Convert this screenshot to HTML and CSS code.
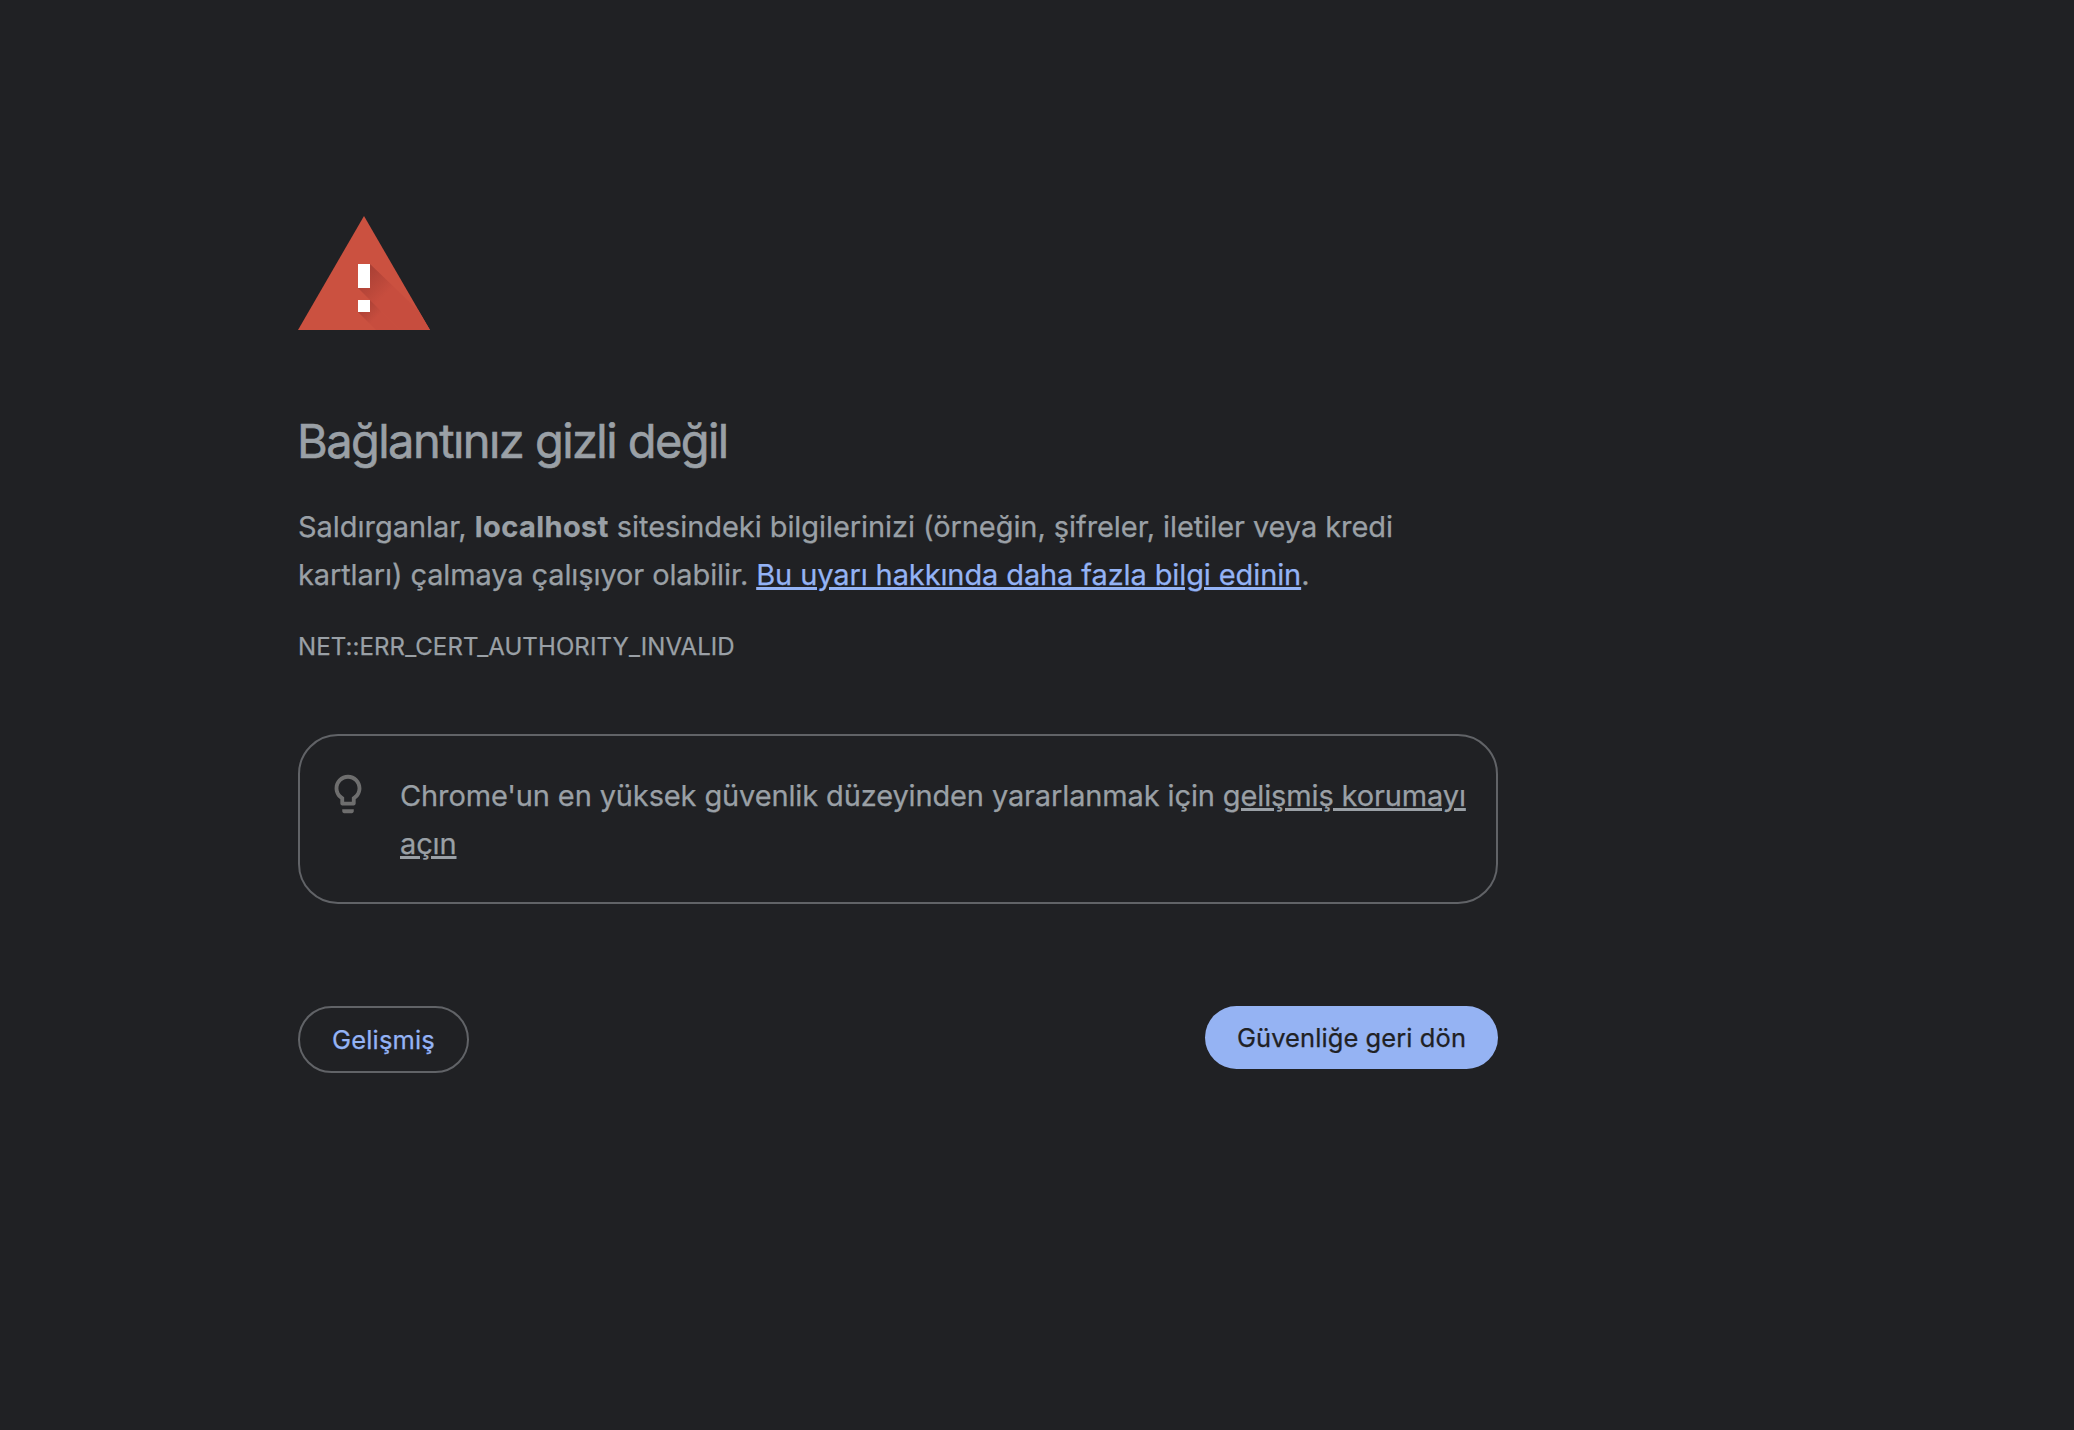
FILE: index.html
```
<!DOCTYPE html>
<html lang="tr">
<head>
<meta charset="utf-8">
<title>Gizlilik hatası</title>
<link rel="stylesheet" href="styles.css">
</head>
<body>
<main class="interstitial">
  <svg class="warning-icon" width="132" height="114" viewBox="0 0 132 114" aria-hidden="true">
    <defs>
      <linearGradient id="bar-shade" gradientUnits="userSpaceOnUse" x1="64" y1="58" x2="86" y2="80">
        <stop offset="0" stop-color="#a94035"/>
        <stop offset="1" stop-color="#c74d3e"/>
      </linearGradient>
      <linearGradient id="dot-shade" gradientUnits="userSpaceOnUse" x1="64" y1="88" x2="78" y2="102">
        <stop offset="0" stop-color="#a94035"/>
        <stop offset="1" stop-color="#c74d3e"/>
      </linearGradient>
    </defs>
    <path fill="#cb5140" d="M66 0l66 114H0z"/>
    <path fill="url(#bar-shade)" d="M72 48l48 46 12 20H102L60 72z"/>
    <path fill="url(#dot-shade)" d="M72 84l30 30H78L60 96z"/>
    <path fill="#fff" d="M60 48h12v24H60zM60 84h12v12H60z"/>
  </svg>
  <h1 class="title">Bağlantınız gizli değil</h1>
  <p class="message"><span class="lead">Saldırganlar, </span><strong class="host">localhost</strong> sitesindeki bilgilerinizi (örneğin, şifreler, iletiler veya kredi<br><span class="second-line">kartları) çalmaya çalışıyor olabilir. <a class="learn-more" href="#">Bu uyarı hakkında daha fazla bilgi edinin</a>.</span></p>
  <div class="error-code">NET::ERR_CERT_AUTHORITY_INVALID</div>
  <section class="promo">
    <svg class="bulb-icon" width="46" height="46" viewBox="0 0 24 24" aria-hidden="true"><path fill="#6e6e6e" d="M9 21c0 .55.45 1 1 1h4c.55 0 1-.45 1-1v-1H9v1zm3-19C8.140 2 5 5.140 5 9c0 2.380 1.190 4.470 3 5.740V17c0 .55.45 1 1 1h6c.55 0 1-.45 1-1v-2.260c1.810-1.270 3-3.360 3-5.740 0-3.860-3.140-7-7-7zm2.850 11.100l-.85.6V16h-4v-2.300l-.85-.6C7.800 12.160 7 10.630 7 9c0-2.760 2.240-5 5-5s5 2.240 5 5c0 1.630-.8 3.160-2.150 4.100z"/></svg>
    <p class="promo-text">Chrome'un en yüksek güvenlik düzeyinden yararlanmak için <a class="promo-link" href="#">gelişmiş korumayı<br>açın</a></p>
  </section>
  <div class="actions">
    <button class="button secondary" type="button">Gelişmiş</button>
    <button class="button primary" type="button">Güvenliğe geri dön</button>
  </div>
</main>
</body>
</html>
```
FILE: styles.css
```
* { box-sizing: border-box; }
body {
  margin: 0;
  min-height: 100vh;
  background: #202124;
  color: #9aa0a6;
  font-family: Inter, sans-serif;
  -webkit-text-stroke: 0.25px currentColor;
}
.interstitial {
  width: 1200px;
  margin-left: 298px;
  padding-top: 216px;
}
.warning-icon { display: block; }
.title {
  margin: 82px 0 0 -1px;
  font-size: 47px;
  font-weight: 400;
  line-height: 58px;
  letter-spacing: -1.56px;
  -webkit-text-stroke-width: 0.6px;
}
.message, .promo-text {
  margin: 0;
  font-size: 29px;
  line-height: 48px;
  white-space: nowrap;
}
.message { margin-top: 33px; letter-spacing: -0.07px; }
.lead { letter-spacing: -0.04px; }
.host { font-weight: 700; letter-spacing: 0.41px; }
.second-line { letter-spacing: -0.11px; }
a {
  text-decoration: underline;
  text-decoration-thickness: 3px;
  text-underline-offset: 2px;
}
.learn-more { color: #94b3f5; }
.error-code {
  margin-top: 29px;
  font-size: 24px;
  line-height: 38px;
  letter-spacing: 0.1px;
}
.promo {
  display: flex;
  height: 170px;
  margin-top: 68px;
  padding: 36px 24.500px 34px;
  border: 2px solid #616367;
  border-radius: 40px;
}
.bulb-icon {
  flex: none;
  margin: -1px 29.500px 0 0;
}
.promo-text { letter-spacing: -0.13px; }
.promo-link { color: inherit; }
.actions {
  display: flex;
  justify-content: space-between;
  align-items: flex-start;
  margin-top: 102px;
}
.button {
  padding: 0;
  border: 0;
  border-radius: 34px;
  font: 400 25.5px/63px Inter, sans-serif;
  letter-spacing: 0.08px;
  white-space: nowrap;
}
.secondary {
  width: 171px;
  border: 2px solid #616367;
  background: none;
  color: #94b3f5;
  letter-spacing: 0.15px;
}
.primary {
  width: 293px;
  background: #95b3f3;
  color: #202124;
}
```
